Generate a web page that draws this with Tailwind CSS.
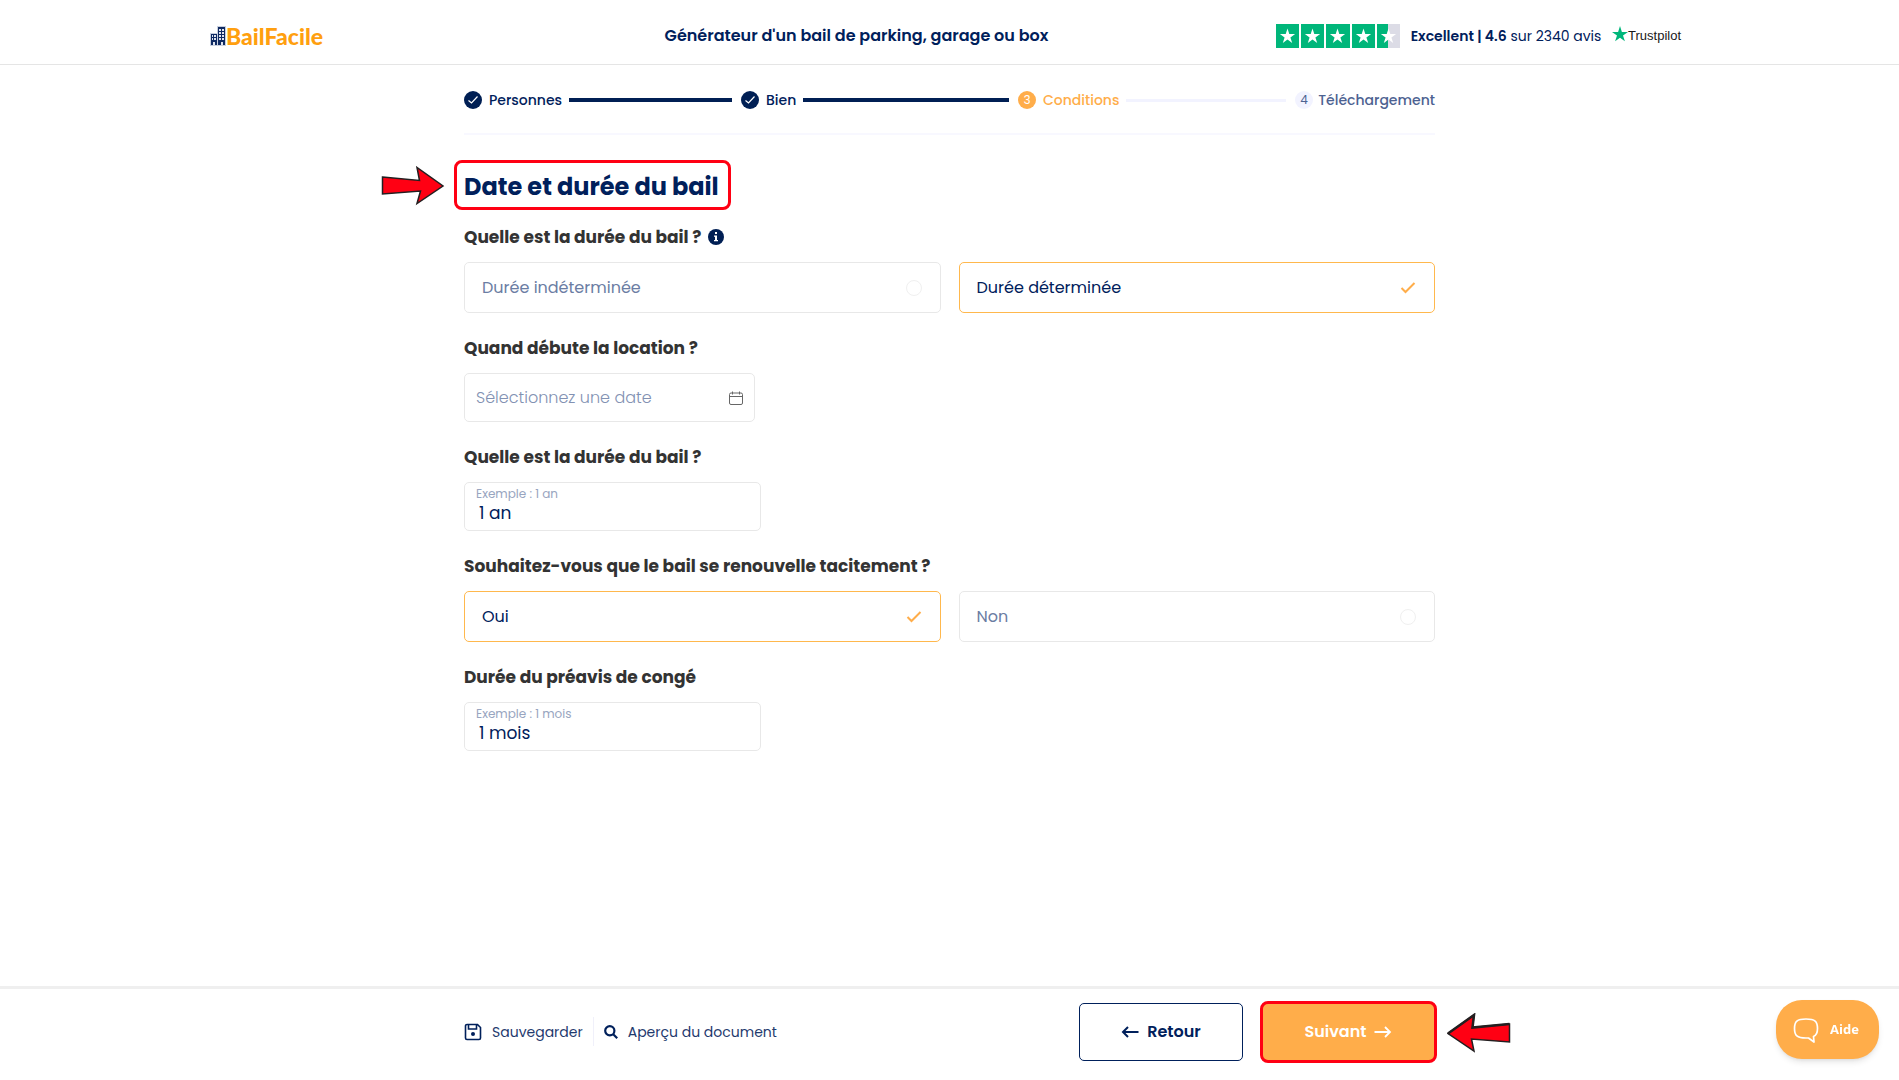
<!DOCTYPE html>
<html lang="fr">
<head>
    <meta charset="UTF-8">
    <meta name="viewport" content="width=device-width, initial-scale=1.0">
    <title>BailFacile - Générateur d'un bail de parking, garage ou box</title>
    <script src="https://cdn.jsdelivr.net/npm/@tailwindcss/browser@4"></script>
</head>
<body class="min-h-screen flex flex-col bg-white text-[#00205b] font-[Poppins,Inter,sans-serif]">

    <!-- En-tête -->
    <header class="border-b border-[#e5e5e5]">
        <div class="mx-auto flex h-16 max-w-[1479px] items-center pt-2 pr-2">
            <a href="#" class="flex w-[227px] shrink-0 items-center font-[Lato,sans-serif] text-[23px] leading-6 font-black text-[#ff9f0f]">
                <svg class="h-5 w-4" viewBox="0 0 16 20">
                    <path fill="#c9d0de" d="M7 0h9v20H0V7h7z"/>
                    <path fill="#0f2a62" d="M8 1h7v18H8zM1 8h6v11H1z"/>
                    <path fill="#dfe4ee" d="M9 3h2v2H9zm3 0h2v2h-2zM9 6h2v2H9zm3 0h2v2h-2zM9 9h2v2H9zm3 0h2v2h-2zM9 12h2v2H9zm3 0h2v2h-2zM2 9h1v2H2zm2 0h2v2H4zM2 12h1v2H2zm2 0h2v2H4zM3 16h2v3H3zm8 0h2v3h-2z"/>
                </svg>
                <span>BailFacile</span>
            </a>
            <p class="flex-1 text-center font-semibold">Générateur d'un bail de parking, garage ou box</p>
            <div class="flex w-[405px] shrink-0 items-center justify-between">
                <svg class="h-6 w-[124px]" viewBox="0 0 124 24">
                    <path fill="#00b67a" d="M0 0h23v24H0zM25 0h23v24H25zM50 0h24v24H50zM76 0h23v24H76zM101 0h11v24h-11z"/>
                    <path fill="#dcdce6" d="M112 0h12v24h-12z"/>
                    <g fill="#fff">
                        <path id="star" d="M11.500 4.500l1.800 5.500h5.800l-4.700 3.400 1.800 5.600-4.700-3.400-4.700 3.400 1.800-5.600L3.900 10h5.800z"/>
                        <use href="#star" x="25"/>
                        <use href="#star" x="50"/>
                        <use href="#star" x="76"/>
                        <use href="#star" x="101"/>
                    </g>
                </svg>
                <p class="text-sm"><strong class="font-semibold">Excellent | 4.6</strong> sur 2340 avis</p>
                <a href="#" class="flex items-center font-[Liberation_Sans,Arial,sans-serif] text-[13px] text-[#191919]">
                    <svg class="mb-1 size-4" viewBox="0 0 16 16">
                        <path fill="#00b67a" d="M8 0l1.900 5.900H16l-5 3.500 1.900 5.900L8 11.700l-4.900 3.600L5 9.400 0 5.900h6.100z"/>
                    </svg>
                    Trustpilot
                </a>
            </div>
        </div>
    </header>

    <main class="mx-auto w-full max-w-[971px] flex-1">
        <!-- Étapes -->
        <ol class="flex h-[70px] items-center border-b-2 border-[#f8f8ff] pt-[2px] text-sm font-medium">
            <li class="flex w-[277px] items-center pr-[9px]">
                <svg class="mr-[7px] size-[18px]" viewBox="0 0 18 18"><circle cx="9" cy="9" r="9" fill="#001f54"/><path d="M4.500 9.500l3 2.500 6-6.500" fill="none" stroke="#fff" stroke-width="1.200"/></svg>
                Personnes
                <span class="ml-[7px] h-1 flex-1 bg-[#001f54]"></span>
            </li>
            <li class="flex w-[277px] items-center pr-[9px]">
                <svg class="mr-[7px] size-[18px]" viewBox="0 0 18 18"><circle cx="9" cy="9" r="9" fill="#001f54"/><path d="M4.500 9.500l3 2.500 6-6.500" fill="none" stroke="#fff" stroke-width="1.200"/></svg>
                Bien
                <span class="ml-[7px] h-1 flex-1 bg-[#001f54]"></span>
            </li>
            <li class="flex w-[277px] items-center pr-[9px] text-[#ffad4a]">
                <span class="mr-[7px] flex size-[18px] items-center justify-center rounded-full bg-[#ffad4a] text-xs font-normal text-white">3</span>
                Conditions
                <span class="ml-[7px] h-[3px] flex-1 bg-[#f2f3ff]"></span>
            </li>
            <li class="flex flex-1 items-center justify-between text-[#4d6291]">
                <span class="flex size-[18px] items-center justify-center rounded-full bg-[#f2f3ff] text-xs font-normal">4</span>
                Téléchargement
            </li>
        </ol>

        <div class="relative mt-[25px] -ml-[10px] h-[50px] w-[277px] rounded-lg border-3 border-[#ff0013] px-[7px]">
            <h1 class="whitespace-nowrap text-2xl leading-[48px] font-bold">Date et durée du bail</h1>
            <svg class="absolute top-[3px] -left-[76px] h-10 w-16" viewBox="0 0 64 40">
                <path fill="#ff0013" stroke="#231f20" stroke-width="1.500" d="M1.500 11L38.500 14.500 36 1.500 62 20 36 37.500 39.500 25 1.500 28z"/>
            </svg>
        </div>

        <form id="bailForm">
            <fieldset class="mt-[15px]">
                <legend class="mb-[13px] flex items-center gap-[7px] text-[17px] leading-6 font-bold text-[#333]">
                    Quelle est la durée du bail ?
                    <svg class="size-4" viewBox="0 0 16 16"><circle cx="8" cy="8" r="8" fill="#001f54"/><path fill="#fff" d="M7 3h2v2H7zM6 6.500h3V11h1v1.200H6V11h1V7.700H6z"/></svg>
                </legend>
                <div class="grid grid-cols-2 gap-[18px]">
                    <label class="flex h-[51px] items-center justify-between rounded-[5px] border border-[#e8e8e8] px-[17px] text-[#6b7da3] has-checked:border-[#ffb84d] has-checked:text-[#00205b]">
                        Durée indéterminée
                        <span class="grid size-[18px] place-items-center">
                            <input type="radio" name="duree" value="indeterminee" class="peer size-4 appearance-none rounded-full border border-[#f0f0f0] [grid-area:1/1] checked:border-transparent">
                            <svg class="size-4 opacity-0 [grid-area:1/1] peer-checked:opacity-100" viewBox="0 0 16 16"><path d="M1.500 8l4 4 9-9" fill="none" stroke="#ffad4a" stroke-width="2"/></svg>
                        </span>
                    </label>
                    <label class="flex h-[51px] items-center justify-between rounded-[5px] border border-[#e8e8e8] px-[17px] text-[#6b7da3] has-checked:border-[#ffb84d] has-checked:text-[#00205b]">
                        Durée déterminée
                        <span class="grid size-[18px] place-items-center">
                            <input type="radio" name="duree" value="determinee" checked class="peer size-4 appearance-none rounded-full border border-[#f0f0f0] [grid-area:1/1] checked:border-transparent">
                            <svg class="size-4 opacity-0 [grid-area:1/1] peer-checked:opacity-100" viewBox="0 0 16 16"><path d="M1.500 8l4 4 9-9" fill="none" stroke="#ffad4a" stroke-width="2"/></svg>
                        </span>
                    </label>
                </div>
            </fieldset>

            <div class="mt-[23px]">
                <label for="date_debut" class="mb-[13px] block text-[17px] leading-6 font-bold text-[#333]">Quand débute la location ?</label>
                <div class="flex h-[49px] w-[291px] items-center rounded-[5px] border border-[#e8e8e8] px-[11px]">
                    <input type="text" id="date_debut" name="date_debut" placeholder="Sélectionnez une date" class="min-w-0 flex-1 font-light outline-none placeholder:text-[#8291b2]">
                    <svg class="size-[14px]" viewBox="0 0 14 14" fill="none" stroke="#666"><rect x=".5" y="2" width="13" height="11.500" rx="1.500"/><path d="M.5 5.500h13M3.500 .5v3M10.500 .5v3"/></svg>
                </div>
            </div>

            <div class="mt-[23px]">
                <label for="duree_bail" class="mb-[13px] block text-[17px] leading-6 font-bold text-[#333]">Quelle est la durée du bail ?</label>
                <div class="flex h-[49px] w-[297px] flex-col rounded-[5px] border border-[#e8e8e8] px-[11px] pt-[3px]">
                    <label for="duree_bail" class="text-xs leading-4 text-[#98a5c0]">Exemple : 1 an</label>
                    <input type="text" id="duree_bail" name="duree_bail" value="1 an" class="w-full pl-[3px] text-[17px] leading-[23px] outline-none">
                </div>
            </div>

            <fieldset class="mt-[23px]">
                <legend class="mb-[13px] text-[17px] leading-6 font-bold text-[#333]">Souhaitez-vous que le bail se renouvelle tacitement ?</legend>
                <div class="grid grid-cols-2 gap-[18px]">
                    <label class="flex h-[51px] items-center justify-between rounded-[5px] border border-[#e8e8e8] px-[17px] text-[#6b7da3] has-checked:border-[#ffb84d] has-checked:text-[#00205b]">
                        Oui
                        <span class="grid size-[18px] place-items-center">
                            <input type="radio" name="renouvellement" value="oui" checked class="peer size-4 appearance-none rounded-full border border-[#f0f0f0] [grid-area:1/1] checked:border-transparent">
                            <svg class="size-4 opacity-0 [grid-area:1/1] peer-checked:opacity-100" viewBox="0 0 16 16"><path d="M1.500 8l4 4 9-9" fill="none" stroke="#ffad4a" stroke-width="2"/></svg>
                        </span>
                    </label>
                    <label class="flex h-[51px] items-center justify-between rounded-[5px] border border-[#e8e8e8] px-[17px] text-[#6b7da3] has-checked:border-[#ffb84d] has-checked:text-[#00205b]">
                        Non
                        <span class="grid size-[18px] place-items-center">
                            <input type="radio" name="renouvellement" value="non" class="peer size-4 appearance-none rounded-full border border-[#f0f0f0] [grid-area:1/1] checked:border-transparent">
                            <svg class="size-4 opacity-0 [grid-area:1/1] peer-checked:opacity-100" viewBox="0 0 16 16"><path d="M1.500 8l4 4 9-9" fill="none" stroke="#ffad4a" stroke-width="2"/></svg>
                        </span>
                    </label>
                </div>
            </fieldset>

            <div class="mt-[23px]">
                <label for="preavis" class="mb-[13px] block text-[17px] leading-6 font-bold text-[#333]">Durée du préavis de congé</label>
                <div class="flex h-[49px] w-[297px] flex-col rounded-[5px] border border-[#e8e8e8] px-[11px] pt-[3px]">
                    <label for="preavis" class="text-xs leading-4 text-[#98a5c0]">Exemple : 1 mois</label>
                    <input type="text" id="preavis" name="preavis" value="1 mois" class="w-full pl-[3px] text-[17px] leading-[23px] outline-none">
                </div>
            </div>
        </form>
    </main>

    <!-- Barre d'actions -->
    <footer class="sticky bottom-0 border-t-3 border-[#efefef] bg-white">
        <div class="mx-auto flex h-[91px] w-full max-w-[971px] items-center justify-between pb-[6px]">
            <div class="flex items-center text-sm text-[#1f3a6e]">
                <button type="button" class="flex h-[29px] items-center gap-[10px] border-r border-[#f0f0fa] pr-[10px]">
                    <svg class="size-[18px]" viewBox="0 0 18 18" fill="none" stroke="#00205b" stroke-width="1.600"><path d="M3 1.500h10.500l3 3V15a1.500 1.500 0 0 1-1.500 1.500H3A1.500 1.500 0 0 1 1.500 15V3A1.500 1.500 0 0 1 3 1.500zM4.500 1.500v4.500h8V1.500"/><circle cx="9" cy="11" r="2" fill="#00205b" stroke="none"/></svg>
                    Sauvegarder
                </button>
                <button type="button" class="flex items-center gap-[10px] pl-[10px]">
                    <svg class="size-[14px]" viewBox="0 0 14 14" fill="none" stroke="#00205b" stroke-width="2.200"><circle cx="5.800" cy="5.800" r="4.600"/><path d="M9 9l4.200 4.200"/></svg>
                    Aperçu du document
                </button>
            </div>
            <div class="relative -mr-[2px] flex items-center gap-[17px] font-semibold">
                <button type="button" class="flex h-[58px] w-[164px] items-center justify-center gap-2 rounded-[5px] border border-[#00205b]">
                    <svg class="h-3 w-[18px]" viewBox="0 0 18 12" fill="none" stroke="#00205b" stroke-width="2"><path d="M17.500 6H2M7 1L2 6l5 5"/></svg>
                    Retour
                </button>
                <button type="submit" form="bailForm" class="flex h-[62px] w-[177px] items-center justify-center gap-2 rounded-lg border-3 border-[#ff0013] bg-[#ffad4a] text-white">
                    Suivant
                    <svg class="h-3 w-[18px]" viewBox="0 0 18 12" fill="none" stroke="#fff" stroke-width="1.800"><path d="M.5 6H16M11 1l5 5-5 5"/></svg>
                </button>
                <svg class="absolute top-[12px] left-full ml-[10px] h-10 w-16" viewBox="0 0 64 40">
                    <path fill="#ff0013" stroke="#231f20" stroke-width="1.500" d="M62.500 11L25.500 14.500 27 2 1 20.500 27 38 24.500 26 62.500 29z"/>
                    <path fill="none" stroke="#231f20" stroke-width="2.500" d="M62.500 11L25.500 14.500 27 2 1 20.500"/>
                </svg>
            </div>
        </div>
    </footer>

    <button type="button" class="fixed right-5 bottom-[21px] flex h-[59px] w-[103px] items-center justify-center gap-[11px] rounded-[26px] bg-[#ffad4a] pr-[3px] font-[Open_Sans,sans-serif] text-[13px] font-bold text-white shadow-md">
        <svg class="size-[26px]" viewBox="0 0 26 26" fill="none" stroke="#fff" stroke-width="1.700" stroke-linejoin="round"><path d="M13 2C4 2 1.500 4.500 1.500 11.500S4 21 13 21h2.500l5.500 4-.5-5.500c3-1.200 4-4 4-8C24.500 4.500 22 2 13 2z"/></svg>
        Aide
    </button>

</body>
</html>
